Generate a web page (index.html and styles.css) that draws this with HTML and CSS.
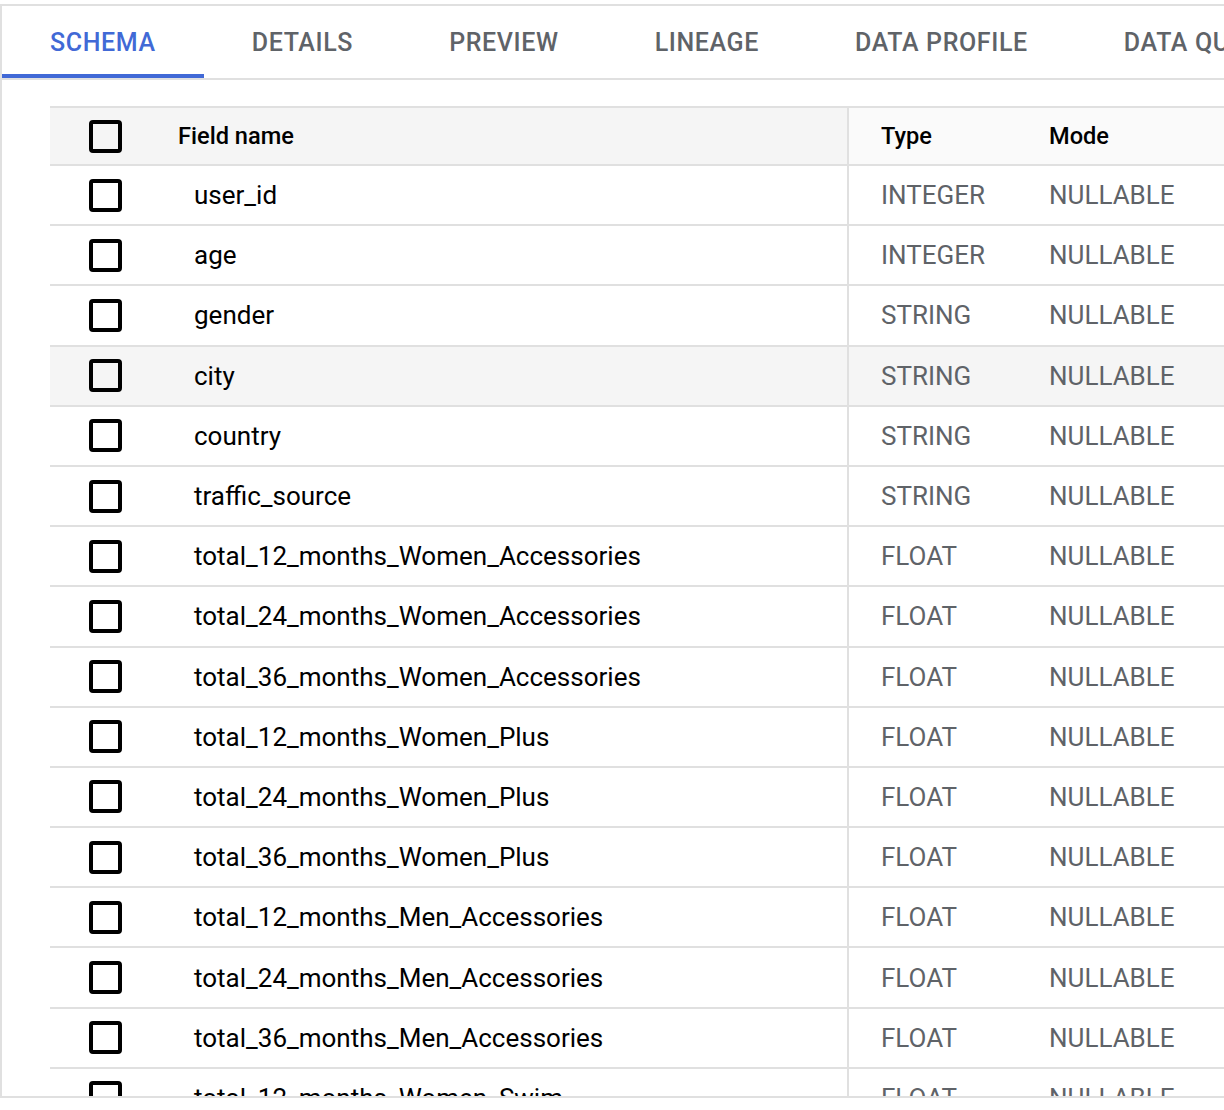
FILE: index.html
```html
<!DOCTYPE html>
<html lang="en">
<head>
<meta charset="utf-8">
<title>Schema</title>
<link rel="stylesheet" href="styles.css">
</head>
<body>
<div class="page">
  <div class="panel">
    <nav class="tabs">
      <div class="tab active">Schema</div>
      <div class="tab">Details</div>
      <div class="tab">Preview</div>
      <div class="tab">Lineage</div>
      <div class="tab">Data profile</div>
      <div class="tab">Data quality</div>
    </nav>
    <div class="content">
      <div class="table">
        <div class="row head">
          <div class="cell name"><span class="cb"></span><span class="label">Field name</span></div>
          <div class="cell type">Type</div>
          <div class="cell mode">Mode</div>
        </div>
        <div class="row"><div class="cell name"><span class="cb"></span><span class="label">user_id</span></div><div class="cell type">INTEGER</div><div class="cell mode">NULLABLE</div></div>
        <div class="row"><div class="cell name"><span class="cb"></span><span class="label">age</span></div><div class="cell type">INTEGER</div><div class="cell mode">NULLABLE</div></div>
        <div class="row"><div class="cell name"><span class="cb"></span><span class="label">gender</span></div><div class="cell type">STRING</div><div class="cell mode">NULLABLE</div></div>
        <div class="row hover"><div class="cell name"><span class="cb"></span><span class="label">city</span></div><div class="cell type">STRING</div><div class="cell mode">NULLABLE</div></div>
        <div class="row"><div class="cell name"><span class="cb"></span><span class="label">country</span></div><div class="cell type">STRING</div><div class="cell mode">NULLABLE</div></div>
        <div class="row"><div class="cell name"><span class="cb"></span><span class="label">traffic_source</span></div><div class="cell type">STRING</div><div class="cell mode">NULLABLE</div></div>
        <div class="row"><div class="cell name"><span class="cb"></span><span class="label">total_12_months_Women_Accessories</span></div><div class="cell type">FLOAT</div><div class="cell mode">NULLABLE</div></div>
        <div class="row"><div class="cell name"><span class="cb"></span><span class="label">total_24_months_Women_Accessories</span></div><div class="cell type">FLOAT</div><div class="cell mode">NULLABLE</div></div>
        <div class="row"><div class="cell name"><span class="cb"></span><span class="label">total_36_months_Women_Accessories</span></div><div class="cell type">FLOAT</div><div class="cell mode">NULLABLE</div></div>
        <div class="row"><div class="cell name"><span class="cb"></span><span class="label">total_12_months_Women_Plus</span></div><div class="cell type">FLOAT</div><div class="cell mode">NULLABLE</div></div>
        <div class="row"><div class="cell name"><span class="cb"></span><span class="label">total_24_months_Women_Plus</span></div><div class="cell type">FLOAT</div><div class="cell mode">NULLABLE</div></div>
        <div class="row"><div class="cell name"><span class="cb"></span><span class="label">total_36_months_Women_Plus</span></div><div class="cell type">FLOAT</div><div class="cell mode">NULLABLE</div></div>
        <div class="row"><div class="cell name"><span class="cb"></span><span class="label">total_12_months_Men_Accessories</span></div><div class="cell type">FLOAT</div><div class="cell mode">NULLABLE</div></div>
        <div class="row"><div class="cell name"><span class="cb"></span><span class="label">total_24_months_Men_Accessories</span></div><div class="cell type">FLOAT</div><div class="cell mode">NULLABLE</div></div>
        <div class="row"><div class="cell name"><span class="cb"></span><span class="label">total_36_months_Men_Accessories</span></div><div class="cell type">FLOAT</div><div class="cell mode">NULLABLE</div></div>
        <div class="row"><div class="cell name"><span class="cb"></span><span class="label">total_12_months_Women_Swim</span></div><div class="cell type">FLOAT</div><div class="cell mode">NULLABLE</div></div>
        <div class="row"><div class="cell name"><span class="cb"></span><span class="label">total_24_months_Women_Swim</span></div><div class="cell type">FLOAT</div><div class="cell mode">NULLABLE</div></div>
      </div>
    </div>
  </div>
</div>
</body>
</html>
```

FILE: styles.css
```css
html, body {
  margin: 0;
  padding: 0;
  background: #ffffff;
}

body {
  font-family: Roboto, "Liberation Sans", Arial, sans-serif;
  color: #202124;
}

.page {
  padding-top: 4px;
  width: 1224px;
  height: 1110px;
  box-sizing: border-box;
  overflow: hidden;
}

.panel {
  height: 1094px;
  box-sizing: border-box;
  border-top: 2px solid #e0e0e0;
  border-left: 2px solid #e0e0e0;
  border-bottom: 2px solid #e0e0e0;
  overflow: hidden;
  display: flex;
  flex-direction: column;
}

.tabs {
  display: flex;
  height: 74px;
  box-sizing: border-box;
  border-bottom: 2px solid #e0e0e0;
  white-space: nowrap;
  flex: none;
}

.tab {
  padding: 4px 48px 0;
  height: 72px;
  box-sizing: border-box;
  display: flex;
  align-items: center;
  font-size: 25px;
  font-weight: 500;
  letter-spacing: 0.62px;
  text-transform: uppercase;
  color: #5f6368;
  flex: none;
  border-bottom: 4px solid transparent;
}

.tab.active {
  color: #4169d6;
  border-bottom-color: #4169d6;
}

.content {
  padding: 26px 0 0 48px;
  flex: 1;
  overflow: hidden;
}

.table {
  width: 1320px;
  border-top: 2px solid #e0e0e0;
}

.row {
  display: grid;
  grid-template-columns: 797px 170px 1fr;
  height: 60.2px;
  box-sizing: border-box;
  border-bottom: 2px solid #e0e0e0;
  font-size: 26px;
}

.row.head {
  height: 58px;
  font-size: 23.6px;
  font-weight: 500;
  color: #000000;
}

.row.head .cell.name {
  background: #f5f5f5;
  color: #000000;
}

.row.head .cell.type,
.row.head .cell.mode {
  background: #fafafa;
  color: #000000;
}

.row.hover {
  background: #f5f5f5;
}

.cell {
  display: flex;
  align-items: center;
  white-space: nowrap;
  box-sizing: border-box;
}

.cell.name {
  padding-left: 39px;
  color: #000000;
}

.cell.type {
  border-left: 2px solid #e0e0e0;
  padding-left: 32px;
  color: #5f6368;
}

.cell.mode {
  padding-left: 32px;
  color: #5f6368;
}

.cb {
  width: 33px;
  height: 33px;
  box-sizing: border-box;
  border: 4px solid #000000;
  border-radius: 4px;
  flex: none;
}

.label {
  margin-left: 72px;
}

.row.head .label {
  margin-left: 56px;
}
```
